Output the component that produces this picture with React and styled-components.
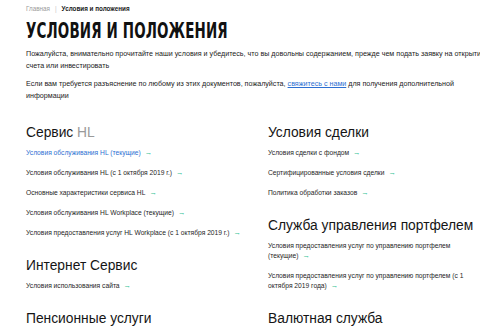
import React from "react";
import styled, { createGlobalStyle } from "styled-components";

const Global = createGlobalStyle`
  html, body { margin: 0; padding: 0; background: #fff; overflow: hidden; }
  body { font-family: "Liberation Sans", Arial, sans-serif; color: #1b1b1b; }
`;

const Page = styled.div`
  width: 480px;
  height: 326px;
  overflow: hidden;
  padding: 0 0 0 26px;
  box-sizing: border-box;
`;

const Crumbs = styled.div`
  display: flex;
  align-items: center;
  gap: 5px;
  padding-top: 5px;
  height: 7px;
  font-size: 6.3px;
  line-height: 7px;
`;
const Crumb = styled.span`
  color: ${(p) => (p.$current ? "#1b1b1b" : "#9a9a9a")};
  font-weight: ${(p) => (p.$current ? 700 : 400)};
`;
const Sep = styled.span`
  color: #c8c8c8;
`;

const Title = styled.h1`
  margin: 6px 0 0;
  font-family: "DejaVu Sans Condensed", "DejaVu Sans", sans-serif;
  font-weight: 700;
  font-size: 22px;
  line-height: 26px;
  letter-spacing: 0.2px;
  white-space: nowrap;
  transform: scaleX(0.68);
  transform-origin: left center;
  color: #111;
`;

const Intro = styled.p`
  width: 470px;
  margin: ${(p) => (p.$first ? "5px" : "7px")} 0 0;
  font-size: 7.15px;
  line-height: 11.5px;
  color: #222;
`;
const InlineLink = styled.a`
  color: #2d6fd2;
  text-decoration: underline;
`;

const Columns = styled.div`
  display: grid;
  grid-template-columns: 242px 212px;
  margin-top: 21px;
`;
const Column = styled.div`
  display: flex;
  flex-direction: column;
  gap: ${(p) => p.$gap || 18}px;
`;
const Section = styled.section`
  display: flex;
  flex-direction: column;
`;
const Heading = styled.h2`
  margin: 0 0 5px;
  font-size: 13.8px;
  line-height: 20px;
  font-weight: 400;
  color: #151515;
  white-space: nowrap;
`;
const Light = styled.span`
  color: #9a9a9a;
  font-weight: 300;
`;
const Links = styled.div`
  display: flex;
  flex-direction: column;
  gap: 10px;
`;
const Item = styled.a`
  display: block;
  font-size: 6.7px;
  line-height: 10px;
  color: ${(p) => (p.$active ? "#2d6fd2" : "#1e1e1e")};
  text-decoration: none;
  max-width: ${(p) => (p.$narrow ? "205px" : "240px")};
`;
const Arrow = styled.span`
  color: #35c295;
  font-size: 7.5px;
  font-weight: 700;
  margin-left: 4px;
`;

const L = ({ children, active, narrow }) => (
  <Item $active={active} $narrow={narrow}>
    {children}
    <Arrow>→</Arrow>
  </Item>
);

export default function App() {
  return (
    <Page>
      <Global />
      <Crumbs>
        <Crumb>Главная</Crumb>
        <Sep>|</Sep>
        <Crumb $current>Условия и положения</Crumb>
      </Crumbs>
      <Title>УСЛОВИЯ И ПОЛОЖЕНИЯ</Title>
      <Intro $first>
        Пожалуйста, внимательно прочитайте наши условия и убедитесь, что вы довольны
        содержанием, прежде чем подать заявку на открытие счета или инвестировать
      </Intro>
      <Intro>
        Если вам требуется разъяснение по любому из этих документов, пожалуйста,{" "}
        <InlineLink>свяжитесь с нами</InlineLink> для получения дополнительной информации
      </Intro>
      <Columns>
        <Column>
          <Section>
            <Heading>
              Сервис <Light>HL</Light>
            </Heading>
            <Links>
              <L active>Условия обслуживания HL (текущие)</L>
              <L>Условия обслуживания HL (с 1 октября 2019 г.)</L>
              <L>Основные характеристики сервиса HL</L>
              <L>Условия обслуживания HL Workplace (текущие)</L>
              <L>Условия предоставления услуг HL Workplace (с 1 октября 2019 г.)</L>
            </Links>
          </Section>
          <Section>
            <Heading>Интернет Сервис</Heading>
            <Links>
              <L>Условия использования сайта</L>
            </Links>
          </Section>
          <Section>
            <Heading>Пенсионные услуги</Heading>
          </Section>
        </Column>
        <Column $gap={18}>
          <Section>
            <Heading>Условия сделки</Heading>
            <Links>
              <L>Условия сделки с фондом</L>
              <L>Сертифицированные условия сделки</L>
              <L>Политика обработки заказов</L>
            </Links>
          </Section>
          <Section>
            <Heading>Служба управления портфелем</Heading>
            <Links>
              <L narrow>Условия предоставления услуг по управлению портфелем (текущие)</L>
              <L narrow>
                Условия предоставления услуг по управлению портфелем (с 1 октября 2019 года)
              </L>
            </Links>
          </Section>
          <Section>
            <Heading>Валютная служба</Heading>
          </Section>
        </Column>
      </Columns>
    </Page>
  );
}
